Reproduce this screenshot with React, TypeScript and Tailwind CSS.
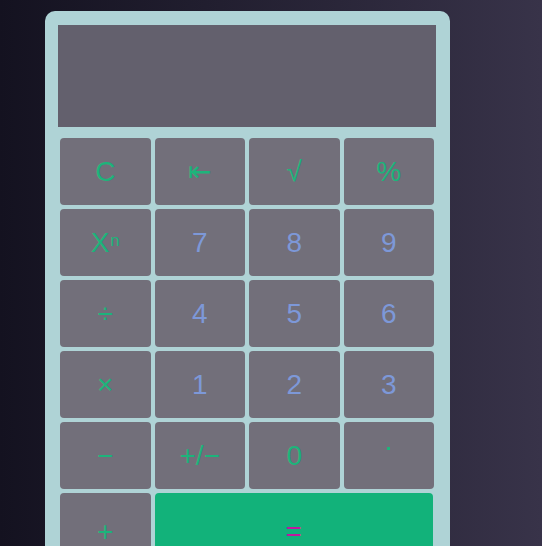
import React from "react";

type B = { label: React.ReactNode; kind: "op" | "num" };

const rows: B[][] = [
  [
    { label: "C", kind: "op" },
    { label: "⇤", kind: "op" },
    { label: "√", kind: "op" },
    { label: "%", kind: "op" },
  ],
  [
    {
      label: (
        <span className="flex items-start">
          <span>X</span>
          <span className="text-[17px] leading-none ml-[1px] mt-[3px]">n</span>
        </span>
      ),
      kind: "op",
    },
    { label: "7", kind: "num" },
    { label: "8", kind: "num" },
    { label: "9", kind: "num" },
  ],
  [
    { label: "÷", kind: "op" },
    { label: "4", kind: "num" },
    { label: "5", kind: "num" },
    { label: "6", kind: "num" },
  ],
  [
    { label: "×", kind: "op" },
    { label: "1", kind: "num" },
    { label: "2", kind: "num" },
    { label: "3", kind: "num" },
  ],
  [
    { label: "−", kind: "op" },
    { label: "+/−", kind: "op" },
    { label: "0", kind: "op" },
    { label: <span className="block w-[3px] h-[3px] bg-[#1db47b] -mt-[15px]" />, kind: "op" },
  ],
];

export default function App() {
  return (
    <div
      className="w-[542px] h-[546px] overflow-hidden bg-gradient-to-r from-[#141220] to-[#383349] pt-[11px] pl-[45px]"
      style={{ fontFamily: '"Liberation Sans", Arial, sans-serif' }}
    >
      <div className="w-[405px] h-[560px] bg-[#afd3d6] rounded-[10px] pt-[14px] pl-[13px] pr-[14px]">
        <div className="w-[378px] h-[102px] bg-[#63606d]" />
        <div className="mt-[9px] grid grid-cols-4 w-[378px]">
          {rows.flat().map((b, i) => (
            <button
              key={i}
              className={`m-0.5 h-[67px] rounded-[4px] bg-[#726f7a] flex items-center justify-center text-[28px] leading-none ${
                b.kind === "num" ? "text-[#7d98d8]" : "text-[#1db47b]"
              }`}
            >
              {b.label}
            </button>
          ))}
          <button className="m-0.5 h-[78px] rounded-[4px] bg-[#726f7a] flex items-center justify-center text-[28px] leading-none text-[#1db47b]">
            +
          </button>
          <button className="col-span-3 m-0.5 mr-[3px] h-[78px] rounded-[4px] bg-[#12b27a] flex items-center justify-center text-[28px] leading-none text-[#c2189f]">
            =
          </button>
        </div>
      </div>
    </div>
  );
}
